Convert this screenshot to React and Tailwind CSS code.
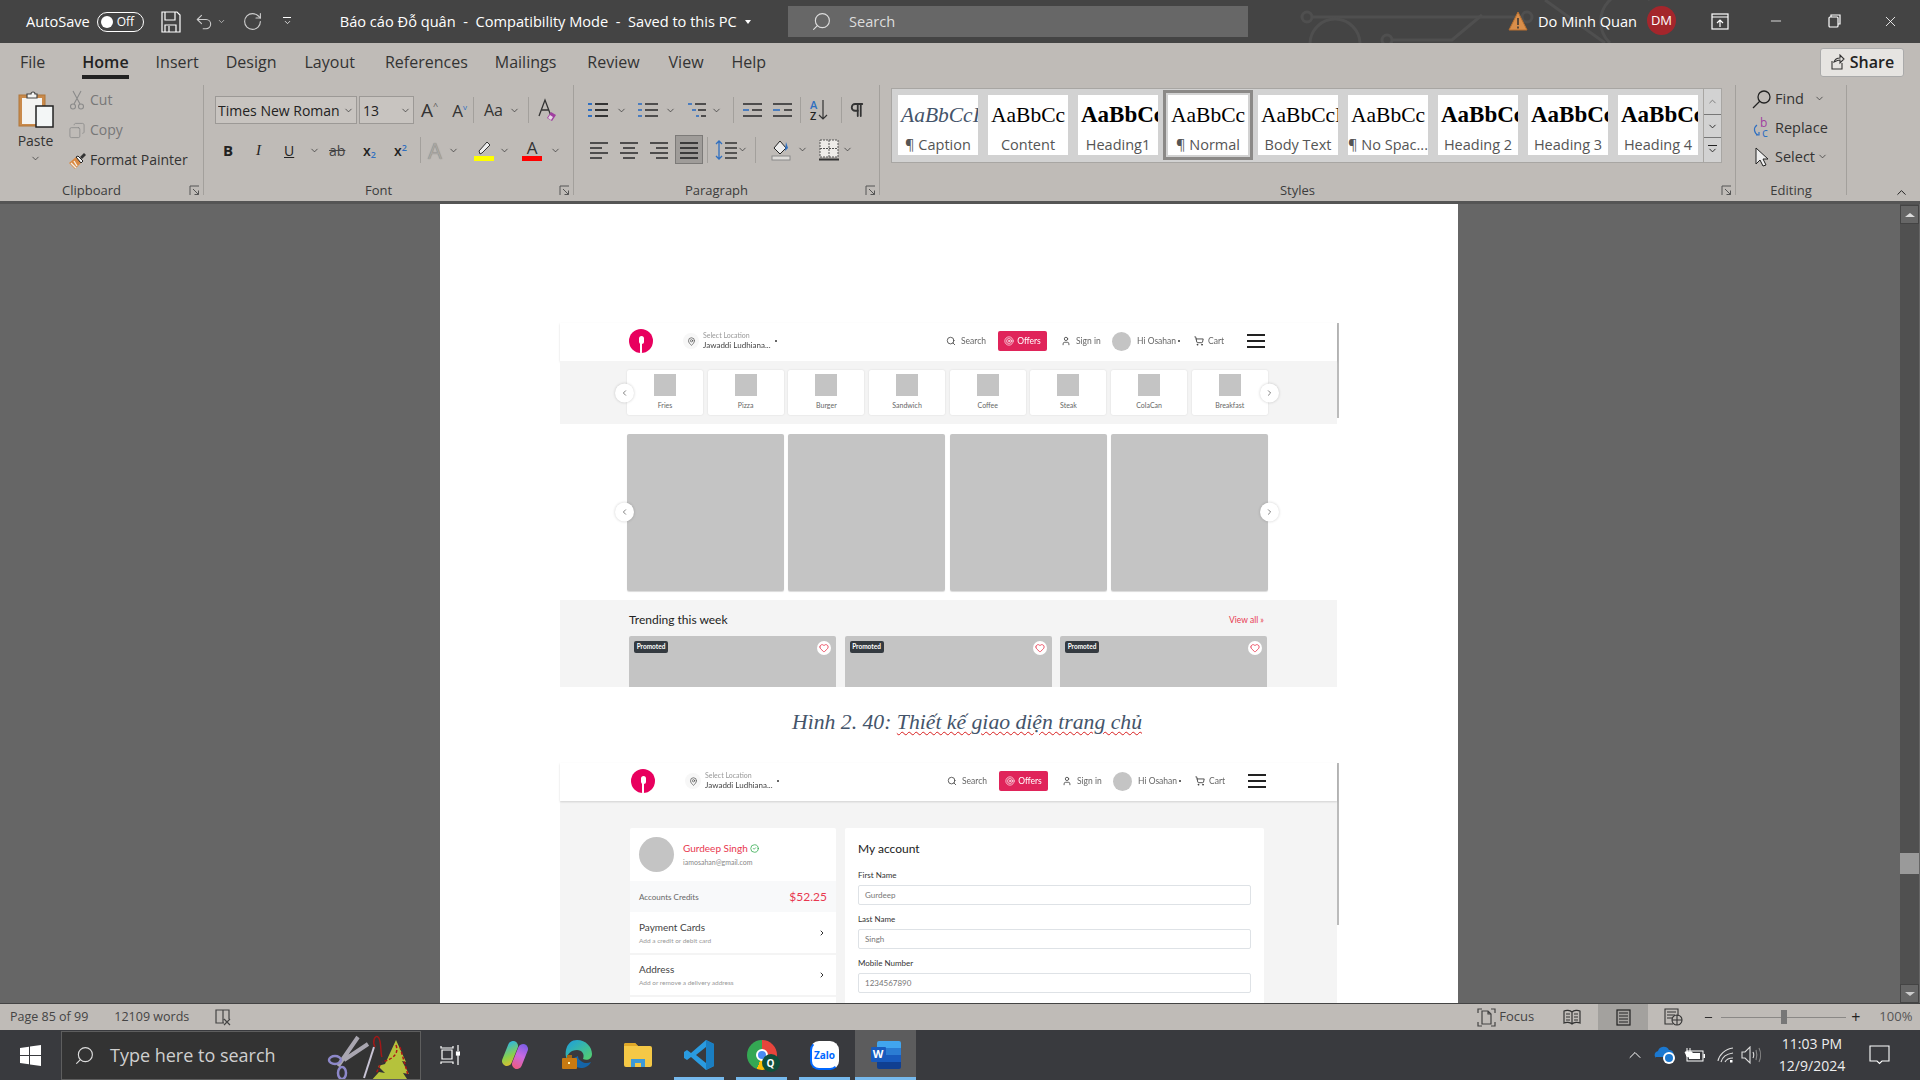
import React from "react";
import { ChevronDown, ChevronUp, ChevronLeft, ChevronRight, Search, MapPin, User, ShoppingCart, Heart, Target, CircleCheck, X, Minus, Undo2, RotateCw, Copy, Pilcrow } from "lucide-react";

const Chev = ({ c = "text-[#333]", s = 11 }) => <ChevronDown size={s} strokeWidth={1.6} className={c} />;

const Lines = ({ rows, w = 20, h = 18, color = "#333", sw = 1.6 }) => (
  <svg width={w} height={h} viewBox={`0 0 ${w} ${h}`}>
    {rows.map((r, i) => <line key={i} x1={r[0]} x2={r[1]} y1={r[2]} y2={r[2]} stroke={r[3] || color} strokeWidth={sw} />)}
  </svg>
);

const Launcher = () => (
  <svg width="11" height="11" viewBox="0 0 11 11" className="absolute right-[3px] top-[4px]" fill="none" stroke="#555" strokeWidth="1">
    <path d="M1 10V1h9M4 4l5.500 5.500M5.500 9.500h4v-4" />
  </svg>
);

function Group({ className, label, pad, children, launcher = true }) {
  return (
    <div className={`relative flex flex-col h-[110px] border-r border-[#a3a09c] ${className}`}>
      <div className="h-[96px] flex shrink-0">{children}</div>
      <div className={`relative h-[14px] flex justify-center items-start text-[13px] leading-[18px] text-[#3c3c3c] ${pad}`}>
        {label}
        {launcher && <Launcher />}
      </div>
    </div>
  );
}

const Sep = ({ className = "" }) => <div className={`w-px h-[26px] bg-[#a3a09c] ${className}`} />;

function PasteIcon() {
  return (
    <svg width="36" height="38" viewBox="0 0 36 38">
      <rect x="1" y="5" width="26" height="31" fill="#c98a4b" stroke="#b0763a" />
      <rect x="4" y="8" width="20" height="26" fill="#f4f4f2" />
      <path d="M9 8V4h4a2 2 0 0 1 4 0h2v4z" fill="#f4f4f2" stroke="#444" strokeWidth="1.2" />
      <rect x="18" y="16" width="17" height="21" fill="#f3f6f6" stroke="#222" strokeWidth="1.5" />
    </svg>
  );
}

function Brush() {
  return (
    <svg width="20" height="19" viewBox="0 0 20 19">
      <path d="M1 12l7-6 5 6-6 6z" fill="#d98a45" />
      <path d="M3 12l5 5M6 10l3 5" stroke="#f6f0e6" strokeWidth="1.4" />
      <path d="M8 6l5 6 2-2-5-5z" fill="#f4f4f4" stroke="#222" />
      <path d="M12 6l4-4 2 2-4 4z" fill="#333" />
    </svg>
  );
}

function Clipboard() {
  return (
    <Group className="w-[204px]" label="Clipboard" pad="pr-5">
      <div className="w-[68px] flex flex-col items-center pt-[5px] pl-[3px] text-[#333]">
        <PasteIcon />
        <span className="text-[14px] leading-[18px] mt-[4px]">Paste</span>
        <Chev c="text-[#333] mt-[3px]" />
      </div>
      <div className="flex flex-col text-[14px] leading-[30px]">
        <div className="flex items-center h-[30px] text-[#777]">
          <svg width="18" height="20" viewBox="0 0 18 20" fill="none" stroke="#8a8a8a" strokeWidth="1.1">
            <path d="M5 1l7 13M13 1L6 14" />
            <circle cx="5" cy="16.500" r="2.500" /><circle cx="13" cy="16.500" r="2.500" />
          </svg>
          <span className="ml-[4px]">Cut</span>
        </div>
        <div className="flex items-center h-[30px] text-[#777]">
          <Copy size={17} strokeWidth={1.1} className="w-[18px] text-[#888] scale-x-[-1]" />
          <span className="ml-[4px]">Copy</span>
        </div>
        <div className="flex items-center h-[30px] text-[#333]">
          <Brush />
          <span className="ml-[2px]">Format Painter</span>
        </div>
      </div>
    </Group>
  );
}

function Font() {
  return (
    <Group className="w-[370px]" label="Font" pad="pr-5">
      <div className="flex flex-col w-full pl-[11px]">
        <div className="flex items-center h-[28px] mt-[11px]">
          <div className="w-[142px] h-[28px] bg-[#c8c4c0] border border-[#9c9996] flex items-center pl-[2px] text-[14px] text-[#222] overflow-hidden whitespace-nowrap">
            <span className="w-[121px] overflow-hidden mr-[4px]">Times New Roman</span>
            <Chev />
          </div>
          <div className="w-[55px] h-[28px] ml-[2px] bg-[#c8c4c0] border border-[#9c9996] flex items-center pl-[3px] justify-between pr-[2px] text-[14px] text-[#222]">
            13<Chev />
          </div>
          <span className="ml-[7px] text-[19px] text-[#333] leading-none">A<sup className="text-[9px] text-[#555] top-[-8px]">^</sup></span>
          <span className="ml-[14px] text-[17px] text-[#333] leading-none">A<sup className="text-[8px] text-[#2f6fc0] top-[-7px]">v</sup></span>
          <Sep className="ml-[6px]" />
          <span className="ml-[10px] text-[16px] text-[#333] leading-none w-[25px]">Aa</span>
          <Chev />
          <Sep className="ml-[8px]" />
          <svg width="22" height="24" viewBox="0 0 22 24" className="ml-[8px]">
            <path d="M2 18L8 2l6 16M4.500 12h7" fill="none" stroke="#333" strokeWidth="1.3" />
            <path d="M14 14l5 3-4 6-5-3z" fill="#a03fa0" />
            <path d="M11 20l2-3 3 2-2 3z" fill="#e8d8e8" />
          </svg>
        </div>
        <div className="flex items-center h-[28px] mt-[12px] pl-[8px] text-[#222]">
          <span className="w-[33px] text-[15px] font-bold">B</span>
          <span className="w-[28px] text-[15px] italic" style={{ fontFamily: "'Liberation Serif',serif" }}>I</span>
          <span className="w-[25px] text-[14px] underline">U</span>
          <Chev />
          <span className="ml-[9px] w-[34px] text-[14px] line-through text-[#444]">ab</span>
          <span className="w-[31px] text-[14px] font-semibold">x<sub className="text-[9px] text-[#2f6fc0]">2</sub></span>
          <span className="w-[24px] text-[14px] font-semibold">x<sup className="text-[9px] text-[#2f6fc0]">2</sup></span>
          <Sep className="ml-[2px]" />
          <span className="ml-[7px] w-[20px] text-[22px] leading-none text-[#a9a6a2]" style={{ textShadow: "0 0 1px #777" }}>A</span>
          <Chev />
          <div className="ml-[15px] w-[20px] flex flex-col items-center">
            <svg width="18" height="16" viewBox="0 0 18 16"><path d="M5 14l-1-3 8-9 3 3-8 8z" fill="#eee" stroke="#333" /></svg>
            <div className="w-[20px] h-[5px] bg-[#ffff00]" />
          </div>
          <Chev c="text-[#333] ml-[5px]" />
          <div className="ml-[12px] w-[20px] flex flex-col items-center">
            <span className="text-[17px] leading-[16px] text-[#333]">A</span>
            <div className="w-[20px] h-[5px] bg-[#ff0000]" />
          </div>
          <Chev c="text-[#333] ml-[8px]" />
        </div>
      </div>
    </Group>
  );
}

const bl = "#2f6fc0";
function Paragraph() {
  return (
    <Group className="w-[306px]" label="Paragraph" pad="pr-5">
      <div className="flex flex-col w-full pl-[14px]">
        <div className="flex items-center h-[28px] mt-[11px]">
          <Lines rows={[[0, 4, 3, bl], [7, 20, 3], [0, 4, 9, bl], [7, 20, 9], [0, 4, 15, bl], [7, 20, 15]]} sw={2} />
          <Chev c="text-[#333] ml-[8px]" />
          <div className="ml-[11px]"><Lines rows={[[0, 4, 3, bl], [7, 20, 3], [0, 4, 9, bl], [7, 20, 9], [0, 4, 15, bl], [7, 20, 15]]} /></div>
          <Chev c="text-[#333] ml-[7px]" />
          <div className="ml-[12px]"><Lines rows={[[0, 4, 3, bl], [7, 18, 3], [4, 8, 9, bl], [10, 18, 9], [8, 11, 15, bl], [13, 18, 15]]} /></div>
          <Chev c="text-[#333] ml-[3px]" />
          <Sep className="ml-[11px]" />
          <div className="ml-[9px]"><Lines rows={[[0, 19, 3], [9, 19, 9], [0, 6, 9, bl], [0, 19, 15]]} w={19} /></div>
          <div className="ml-[11px]"><Lines rows={[[0, 19, 3], [11, 19, 9], [0, 7, 9, bl], [0, 19, 15]]} w={19} /></div>
          <Sep className="ml-[8px]" />
          <div className="ml-[9px] flex items-center w-[26px]">
            <div className="flex flex-col text-[11px] font-semibold leading-[11px]"><span className="text-[#2f6fc0]">A</span><span className="text-[#222]">Z</span></div>
            <svg width="12" height="22" viewBox="0 0 12 22" fill="none" stroke="#333" strokeWidth="1.2"><path d="M6 1v19M2 16l4 4 4-4" /></svg>
          </div>
          <Sep className="ml-[5px]" />
          <Pilcrow size={18} strokeWidth={2.4} className="ml-[6px] text-[#333]" />
        </div>
        <div className="flex items-center h-[29px] mt-[11px] pl-[2px]">
          <Lines rows={[[0, 18, 2], [0, 12, 7], [0, 18, 12], [0, 12, 17]]} w={18} />
          <div className="ml-[12px]"><Lines rows={[[0, 18, 2], [3, 15, 7], [0, 18, 12], [3, 15, 17]]} w={18} /></div>
          <div className="ml-[12px]"><Lines rows={[[0, 18, 2], [6, 18, 7], [0, 18, 12], [6, 18, 17]]} w={18} /></div>
          <div className="ml-[7px] w-[28px] h-[29px] bg-[#9f9c99] border border-[#7c7a78] flex items-center justify-center">
            <Lines rows={[[0, 18, 2], [0, 18, 7], [0, 18, 12], [0, 18, 17]]} w={18} color="#222" />
          </div>
          <Sep className="ml-[4px]" />
          <div className="ml-[7px]">
            <svg width="22" height="22" viewBox="0 0 22 22" fill="none"><path d="M4 2v18M1 5l3-3 3 3M1 17l3 3 3-3" stroke={bl} strokeWidth="1.3" /><path d="M10 4h12M10 9h12M10 14h12M10 19h12" stroke="#333" strokeWidth="1.5" /></svg>
          </div>
          <Chev />
          <Sep className="ml-[7px]" />
          <div className="ml-[15px]">
            <svg width="20" height="24" viewBox="0 0 20 24"><path d="M3 10l6-7 6 7-6 6z" fill="#eee" stroke="#222" /><path d="M15 4l2 6-3 3z" fill={bl} /><rect x="1" y="18" width="18" height="4" fill="#dedcd9" stroke="#8a8a8a" /></svg>
          </div>
          <Chev c="text-[#333] ml-[6px]" />
          <div className="ml-[11px]">
            <svg width="20" height="22" viewBox="0 0 20 22" fill="none"><rect x="1" y="1" width="18" height="17" fill="#eeece9" stroke="#555" strokeDasharray="2 1" /><path d="M10 1v17M1 9.500h18" stroke="#555" strokeDasharray="2 1" /><path d="M0 20.500h20" stroke="#333" strokeWidth="2" /></svg>
          </div>
          <Chev c="text-[#333] ml-[3px]" />
        </div>
      </div>
    </Group>
  );
}

const styleItems = [
  { n: "¶ Caption", p: "AaBbCcI", c: "italic text-[#44546a] text-[21.500px]" },
  { n: "Content", p: "AaBbCc", c: "text-black text-[21.500px]" },
  { n: "Heading1", p: "AaBbCc", c: "font-bold text-black text-[23px]" },
  { n: "¶ Normal", p: "AaBbCc", c: "text-black text-[21.500px]", sel: true },
  { n: "Body Text", p: "AaBbCcI", c: "text-black text-[21.500px]" },
  { n: "¶ No Spac...", p: "AaBbCc", c: "text-black text-[21.500px]" },
  { n: "Heading 2", p: "AaBbCc", c: "font-bold text-black text-[23px]" },
  { n: "Heading 3", p: "AaBbCc", c: "font-bold text-black text-[23px]" },
  { n: "Heading 4", p: "AaBbCc", c: "font-bold text-black text-[23px]" },
];

function Styles() {
  return (
    <Group className="w-[856px]" label="Styles" pad="pr-5">
      <div className="ml-[11px] mt-[3px] w-[831px] h-[75px] bg-[#d2d2d2] border border-[#a8a6a3] flex relative">
        <div className="flex gap-[10px] pl-[6px] pt-[6px]">
          {styleItems.map((s) => (
            <div key={s.n} className={`w-[80px] h-[60px] bg-white flex flex-col items-center overflow-hidden ${s.sel ? "outline-3 outline-[#8b8987] outline-offset-[2px]" : ""}`}>
              <div className={`w-full h-[39px] shrink-0 px-[3px] pt-[5px] overflow-hidden whitespace-nowrap leading-[30px] text-left ${s.c}`} style={{ fontFamily: "'Liberation Serif',serif" }}>{s.p}</div>
              <div className="text-[14.500px] leading-[21px] text-[#555] whitespace-nowrap">{s.n}</div>
            </div>
          ))}
        </div>
        <div className="absolute right-0 top-0 w-[18px] h-full flex flex-col border-l border-[#a8a6a3]">
          <div className="h-[25px] flex items-center justify-center"><ChevronUp size={11} className="text-[#777]" /></div>
          <div className="h-[24px] border-y border-[#777] flex items-center justify-center"><ChevronDown size={11} className="text-[#222]" /></div>
          <div className="flex-1 flex flex-col items-center justify-center"><div className="w-[9px] h-px bg-[#222] mb-[1px]" /><ChevronDown size={11} className="text-[#222] -mt-[2px]" /></div>
        </div>
      </div>
    </Group>
  );
}

function Editing() {
  return (
    <Group className="w-[111px]" label="Editing" pad="" launcher={false}>
      <div className="flex flex-col pl-[16px] -mt-[1px] text-[14.500px] text-[#333]">
        <div className="flex items-center h-[29px]">
          <svg width="20" height="20" viewBox="0 0 20 20" fill="none" stroke="#222" strokeWidth="1.3"><circle cx="12" cy="8" r="6" /><path d="M8 12l-7 7" /></svg>
          <span className="ml-[3px]">Find</span>
          <Chev c="text-[#333] ml-[10px]" />
        </div>
        <div className="flex items-center h-[29px]">
          <svg width="20" height="22" viewBox="0 0 20 22" fill="none"><text x="8" y="10" fontSize="12" fill="#a03fa0" fontFamily="Open Sans">b</text><text x="10" y="20" fontSize="12" fill="#2f6fc0" fontFamily="Open Sans">c</text><path d="M5 8c-4 3-3 8 1 10M4 18h3v-3" stroke="#2f6fc0" strokeWidth="1.2" /></svg>
          <span className="ml-[3px]">Replace</span>
        </div>
        <div className="flex items-center h-[29px]">
          <svg width="20" height="22" viewBox="0 0 20 22"><path d="M4 2v16l4-4 3 6 3-1-3-6h5z" fill="#eee" stroke="#222" /></svg>
          <span className="ml-[3px]">Select</span>
          <Chev c="text-[#333] ml-[2px]" />
        </div>
      </div>
    </Group>
  );
}

function Ribbon() {
  const tabs = [["Insert", "ml-[27px]"], ["Design", "ml-[27px]"], ["Layout", "ml-[28px]"], ["References", "ml-[30px]"], ["Mailings", "ml-[27px]"], ["Review", "ml-[31px]"], ["View", "ml-[29px]"], ["Help", "ml-[28px]"]];
  return (
    <div className="bg-[#bfbbb7] h-[158px] shrink-0 relative">
      <div className="h-[39px] flex pl-[20px] pb-[2px] text-[16px] text-[#333] items-center">
        <span>File</span>
        <div className="ml-[37px] relative h-[39px] flex items-center font-semibold text-[#222]">
          Home
          <div className="absolute left-0 right-0 bottom-[2px] h-[4px] bg-[#222]" />
        </div>
        {tabs.map(([t, c]) => <span key={t} className={c}>{t}</span>)}
        <div className="ml-auto mr-[16px] mt-[1px] w-[84px] h-[29px] bg-[#e6e4e1] border border-[#aaa] rounded-[3px] flex items-center justify-center gap-[5px] font-semibold text-[#222]">
          <svg width="15" height="16" viewBox="0 0 15 16" fill="none" stroke="#333" strokeWidth="1.1"><path d="M2 7v8h10V9M4 8c1-3 4-4 6-4V1l4 4-4 4V6c-2 0-4 1-6 2z" /></svg>
          Share
        </div>
      </div>
      <div className="flex pt-[3px]">
        <Clipboard />
        <Font />
        <Paragraph />
        <Styles />
        <Editing />
        <ChevronUp size={15} strokeWidth={1.6} className="ml-[47px] mt-[100px] text-[#222]" />
      </div>
    </div>
  );
}

function TitleBar() {
  return (
    <div className="h-[43px] shrink-0 bg-[#444444] flex items-center text-white relative overflow-hidden text-[14.600px]">
      <svg className="absolute left-[1280px] top-0" width="640" height="43" fill="none" stroke="#4f4f4f" strokeWidth="3">
        <circle cx="27" cy="17" r="5" /><path d="M32 17h210" /><circle cx="247" cy="17" r="5" />
        <path d="M30 44a25 25 0 0 1 50 0" /><circle cx="107" cy="40" r="5" /><path d="M112 40h60l30 -25" />
        <path d="M330 43a28 28 0 0 1 40 -43" /><path d="M265 0l60 43" />
      </svg>
      <span className="ml-[26px] relative">AutoSave</span>
      <div className="ml-[7px] w-[47px] h-[20px] border border-white rounded-full flex items-center pl-[3px] relative">
        <div className="w-[12px] h-[12px] bg-white rounded-full" />
        <span className="ml-[4px] text-[12px]">Off</span>
      </div>
      <svg className="ml-[17px] relative" width="20" height="22" viewBox="0 0 20 22" fill="none" stroke="white" strokeWidth="1.2">
        <path d="M1 1h15l3 3v17H1z" /><path d="M4 1v8h10V1M4 21v-7h11v7M8 15v6" />
      </svg>
      <Undo2 size={20} strokeWidth={1.3} className="ml-[13px] relative text-[#ccc]" />
      <ChevronDown size={9} strokeWidth={2} className="ml-[3px] text-[#ccc] relative" />
      <RotateCw size={21} strokeWidth={1.3} className="ml-[16px] text-[#ccc] relative" />
      <div className="ml-[20px] w-[9px] flex flex-col items-center relative"><div className="w-[8px] h-px bg-white" /><ChevronDown size={9} strokeWidth={2} /></div>
      <span className="ml-[48px] whitespace-pre relative">Báo cáo Đỗ quân  -  Compatibility Mode  -  Saved to this PC</span>
      <div className="ml-[8px] w-0 h-0 border-x-[3px] border-x-transparent border-t-[4px] border-t-white relative" />
      <div className="absolute left-[788px] top-[6px] w-[460px] h-[31px] bg-[#676767] flex items-center pl-[23px] text-[#ddd]">
        <Search size={21} strokeWidth={1.3} className="scale-x-[-1]" />
        <span className="ml-[17px]">Search</span>
      </div>
      <svg className="absolute left-[1507px] top-[10px]" width="22" height="22" viewBox="0 0 22 22"><path d="M11 2l9 18H2z" fill="#d98e4a" stroke="#b86f2e" /><path d="M11 8v7M11 16.500v2" stroke="#333" strokeWidth="1.5" /></svg>
      <span className="absolute left-[1538px] top-[11px]">Do Minh Quan</span>
      <div className="absolute left-[1647px] top-[6px] w-[29px] h-[29px] rounded-full bg-[#a4262c] flex items-center justify-center text-[13px]">DM</div>
      <svg className="absolute left-[1711px] top-[13px]" width="18" height="17" viewBox="0 0 18 17" fill="none" stroke="white" strokeWidth="1.2"><rect x="1" y="1" width="16" height="15" /><path d="M1 4h16M9 14V7M6 10l3-3 3 3" /></svg>
      <Minus size={16} strokeWidth={1.2} className="absolute left-[1768px] top-[13px]" />
      <svg className="absolute left-[1828px] top-[14px]" width="13" height="14" viewBox="0 0 13 14" fill="none" stroke="white" strokeWidth="1.2"><rect x="1" y="3" width="9" height="10" rx="1" /><path d="M3 3V1h9v9h-2" /></svg>
      <X size={17} strokeWidth={1.2} className="absolute left-[1882px] top-[13px]" />
    </div>
  );
}

const pageFont = { fontFamily: "Lato,'Noto Sans',sans-serif" };

function Spoon() {
  return (
    <div className="w-[24px] h-[24px] rounded-full bg-[#e8005e] flex items-center justify-center shrink-0 relative overflow-hidden">
      <div className="w-[5px] h-[8px] rounded-full bg-white -mt-[3px]" />
      <div className="absolute bottom-0 w-[1.500px] h-[12px] bg-white left-[11px]" />
    </div>
  );
}

function Nav({ second }) {
  return (
    <div className={`h-[38px] flex items-center relative pb-[2px] shadow-[0_1px_2px_rgba(0,0,0,0.15)] ${second ? "pl-[71px]" : "pl-[69px]"}`}>
      <Spoon />
      <div className="ml-[30px] w-[16px] h-[16px] rounded-full bg-[#f7f7f7] flex items-center justify-center shrink-0"><MapPin size={9} className="text-[#555]" /></div>
      <div className="ml-[4px] w-[72px] flex flex-col shrink-0">
        <span className="text-[7px] leading-[9px] text-[#999]">Select Location</span>
        <span className="text-[8px] leading-[11px] text-[#444] whitespace-nowrap">Jawaddi Ludhiana...</span>
      </div>
      <div className="w-[2px] h-[2px] bg-[#333] rounded-full mb-[1px] shrink-0" />
      <div className={`flex items-center text-[8.500px] text-[#666] whitespace-nowrap ${second ? "ml-[168px]" : "ml-[169px]"}`}>
        <Search size={10} className="text-[#444]" />
        <span className="ml-[5px] w-[24px]">Search</span>
        <div className="w-[49px] h-[20px] ml-[13px] bg-[#e0245a] rounded-[2px] flex items-center justify-center gap-[3px] text-white">
          <Target size={10} strokeWidth={1.6} /> Offers
        </div>
        <User size={10} className="ml-[14px] text-[#444]" />
        <span className="ml-[5px] w-[24px]">Sign in</span>
        <div className="ml-[12px] w-[19px] h-[19px] rounded-full bg-[#c4c4c4]" />
        <span className="ml-[6px] w-[36px]">Hi Osahan</span>
        <div className="ml-[5px] w-[2px] h-[2px] rounded-full bg-[#333]" />
        <ShoppingCart size={10} className="ml-[14px] text-[#333]" />
        <span className="ml-[4px] w-[16px]">Cart</span>
        <div className="ml-[23px] w-[18px] flex flex-col gap-[4px]">
          <div className="h-[2px] bg-[#222]" /><div className="h-[2px] bg-[#222]" /><div className="h-[2px] bg-[#222]" />
        </div>
      </div>
    </div>
  );
}

const Arrow = ({ left }) => (
  <div className={`absolute top-1/2 -translate-y-1/2 w-[19px] h-[19px] rounded-full bg-white shadow-[0_0_3px_rgba(0,0,0,0.2)] flex items-center justify-center ${left ? "left-[55px]" : "left-[700px]"}`}>
    {left ? <ChevronLeft size={9} className="text-[#555]" /> : <ChevronRight size={9} className="text-[#555]" />}
  </div>
);

function Home() {
  const cats = ["Fries", "Pizza", "Burger", "Sandwich", "Coffee", "Steak", "ColaCan", "Breakfast"];
  return (
    <div className="w-[777px] ml-[120px] relative shrink-0 blur-[0.3px]" style={pageFont}>
      <div className="absolute left-[777px] top-0 w-[2px] h-[95px] bg-[#bbb]" />
      <Nav />
      <div className="h-[63px] bg-[#f4f4f4] pt-[9px] pl-[67px] relative">
        <div className="flex gap-[4.700px]">
          {cats.map((c) => (
            <div key={c} className="w-[76px] h-[45px] bg-white rounded-[2px] shadow-[0_0_2px_rgba(0,0,0,0.12)] flex flex-col items-center pt-[4px]">
              <div className="w-[22px] h-[22px] bg-[#c4c4c4]" />
              <span className="text-[7px] leading-[9px] mt-[5px] text-[#666]">{c}</span>
            </div>
          ))}
        </div>
        <Arrow left /><Arrow />
      </div>
      <div className="h-[176px] pt-[10px] pl-[67px] relative">
        <div className="flex gap-[4.300px]">
          <div className="w-[157px] h-[157px] bg-[#c4c4c4] rounded-[2px] shadow-[0_1px_1px_rgba(0,0,0,0.15)]" />
          <div className="w-[157px] h-[157px] bg-[#c4c4c4] rounded-[2px] shadow-[0_1px_1px_rgba(0,0,0,0.15)]" />
          <div className="w-[157px] h-[157px] bg-[#c4c4c4] rounded-[2px] shadow-[0_1px_1px_rgba(0,0,0,0.15)]" />
          <div className="w-[157px] h-[157px] bg-[#c4c4c4] rounded-[2px] shadow-[0_1px_1px_rgba(0,0,0,0.15)]" />
        </div>
        <Arrow left /><Arrow />
      </div>
      <div className="h-[87px] bg-[#f4f4f4] pl-[69px] pr-[69px] overflow-hidden">
        <div className="h-[36px] flex items-center justify-between pt-[4px]">
          <span className="text-[12px] text-[#222]">Trending this week</span>
          <span className="text-[8.500px] text-[#e8384f] mr-[4px]">View all »</span>
        </div>
        <div className="flex gap-[8.500px]">
          {[0, 1, 2].map((i) => (
            <div key={i} className="w-[207px] h-[60px] shrink-0 bg-[#c4c4c4] rounded-[2px] flex justify-between items-start pt-[5px] px-[5px]">
              <span className="w-[34px] h-[12px] bg-[#343a40] rounded-[2px] text-white text-[6.500px] leading-[12px] text-center font-bold">Promoted</span>
              <div className="w-[14px] h-[14px] rounded-full bg-white flex items-center justify-center"><Heart size={10} className="text-[#e8384f]" /></div>
            </div>
          ))}
        </div>
      </div>
    </div>
  );
}

function Caption() {
  return (
    <div className="h-[76px] pt-[20px] pl-[36px] text-center text-[21.700px] leading-[30px] italic text-[#44546a]" style={{ fontFamily: "'Liberation Serif',serif" }}>
      Hình 2. 40: <span className="underline decoration-wavy decoration-[#d81e1e] decoration-1 underline-offset-[2px]">Thiết kế giao diện trang chủ</span>
    </div>
  );
}

const Field = ({ label, value }) => (
  <div className="mt-[9px]">
    <div className="text-[8px] leading-[10px] text-[#333] h-[10px]">{label}</div>
    <div className="h-[20px] mt-[5px] border border-[#dee2e6] rounded-[2px] bg-white px-[6px] flex items-center text-[8px] text-[#777]">{value}</div>
  </div>
);

function Account() {
  return (
    <div className="w-[777px] ml-[120px] relative shrink-0 blur-[0.3px]" style={pageFont}>
      <div className="absolute left-[777px] top-0 w-[2px] h-[162px] bg-[#bbb]" />
      <Nav second />
      <div className="h-[202px] bg-[#f4f4f4] pt-[27px] pl-[70px] flex gap-[9px] overflow-hidden">
        <div className="w-[206px] flex flex-col gap-[2px] shrink-0">
          <div className="bg-white rounded-t-[2px] shrink-0">
            <div className="h-[53px] flex items-center pl-[9px]">
              <div className="w-[35px] h-[35px] rounded-full bg-[#c4c4c4]" />
              <div className="ml-[9px]">
                <div className="text-[10px] leading-[13px] text-[#e8384f] flex items-center gap-[2px]">Gurdeep Singh <CircleCheck size={9} className="text-[#28a745]" /></div>
                <div className="text-[7px] leading-[10px] mt-[2px] text-[#888]">iamosahan@gmail.com</div>
              </div>
            </div>
            <div className="h-[31px] bg-[#f8f9fa] flex items-center justify-between px-[9px]">
              <span className="text-[8px] text-[#666]">Accounts Credits</span>
              <span className="text-[12px] text-[#e8384f]">$52.25</span>
            </div>
            <div className="h-[41px] flex items-center justify-between px-[9px]">
              <div>
                <div className="text-[10px] leading-[13px] text-[#444]">Payment Cards</div>
                <div className="text-[6.500px] leading-[9px] mt-[2px] text-[#999]">Add a credit or debit card</div>
              </div>
              <ChevronRight size={8} strokeWidth={3} className="text-[#333] mr-[1px]" />
            </div>
          </div>
          <div className="bg-white h-[40px] shrink-0 flex items-center justify-between px-[9px]">
            <div>
              <div className="text-[10px] leading-[13px] text-[#444]">Address</div>
              <div className="text-[6.500px] leading-[9px] mt-[2px] text-[#999]">Add or remove a delivery address</div>
            </div>
            <ChevronRight size={8} strokeWidth={3} className="text-[#333] mr-[1px]" />
          </div>
          <div className="bg-white h-[40px] shrink-0" />
        </div>
        <div className="w-[419px] h-[200px] shrink-0 bg-white rounded-t-[2px] px-[13px] pt-[13px]">
          <div className="text-[12px] leading-[16px] text-[#222] pb-[4px]">My account</div>
          <Field label="First Name" value="Gurdeep" />
          <Field label="Last Name" value="Singh" />
          <Field label="Mobile Number" value="1234567890" />
        </div>
      </div>
    </div>
  );
}

function Scrollbar() {
  return (
    <div className="ml-auto mr-[1px] w-[19px] bg-[#505050] flex flex-col relative">
      <div className="h-[19px] bg-[#666] border border-[#444] flex items-center justify-center mt-[1px]">
        <div className="w-0 h-0 border-x-[5px] border-x-transparent border-b-[4px] border-b-[#ddd]" />
      </div>
      <div className="flex-1"><div className="mt-[629px] h-[21px] bg-[#9a9a9a]" /></div>
      <div className="h-[19px] bg-[#666] border border-[#444] flex items-center justify-center">
        <div className="w-0 h-0 border-x-[5px] border-x-transparent border-t-[4px] border-t-[#ccc]" />
      </div>
    </div>
  );
}

function StatusBar() {
  return (
    <div className="h-[27px] shrink-0 bg-[#bfbbb7] border-t border-[#444] flex items-center text-[12.500px] text-[#444]">
      <span className="ml-[10px]">Page 85 of 99</span>
      <span className="ml-[26px]">12109 words</span>
      <svg className="ml-[25px]" width="18" height="18" viewBox="0 0 18 18" fill="none" stroke="#444" strokeWidth="1.2"><path d="M10 15H2V2h7M9 2h6v9" /><path d="M9 2v13M10 11l6 6M16 11l-6 6" /></svg>
      <svg className="ml-[1245px]" width="19" height="19" viewBox="0 0 19 19" fill="none" stroke="#444" strokeWidth="1.2"><path d="M1 5V1h4M14 1h4v4M1 14v4h4M14 18h4v-4" /><path d="M5 3h6l3 3v10H5zM11 3v3h3" /></svg>
      <span className="ml-[3px] text-[13px]">Focus</span>
      <svg className="ml-[29px]" width="18" height="17" viewBox="0 0 18 17" fill="none" stroke="#333" strokeWidth="1.2"><path d="M9 3C7 1 3 1 1 2v12c2-1 6-1 8 1 2-2 6-2 8-1V2c-2-1-6-1-8 1zM9 3v12M3 5h4M3 8h4M3 11h4M11 5h4M11 8h4M11 11h4" /></svg>
      <div className="ml-[17px] w-[50px] h-[26px] bg-[#a3a19e] flex items-center justify-center">
        <svg width="15" height="17" viewBox="0 0 15 17" fill="none" stroke="#222" strokeWidth="1.2"><rect x="1" y="1" width="13" height="15" /><path d="M3 4h9M3 7h9M3 10h9M3 13h9" /></svg>
      </div>
      <svg className="ml-[16px]" width="19" height="18" viewBox="0 0 19 18" fill="none" stroke="#333" strokeWidth="1.1"><path d="M9 16H1V1h13v7M3 4h9M3 7h8M3 10h5" /><circle cx="13" cy="12" r="5" /><path d="M8 12h10M13 7v10" /></svg>
      <Minus size={11} className="ml-[20px] text-[#222]" />
      <div className="ml-[7px] w-[125px] h-px bg-[#8a8886] relative flex items-center">
        <div className="ml-[60px] w-[6px] h-[14px] bg-[#777]" />
      </div>
      <span className="ml-[5px] text-[16px] leading-none text-[#222]">+</span>
      <span className="ml-[19px] text-[13px] text-[#555]">100%</span>
    </div>
  );
}

function TaskIcon({ line, className, children }) {
  return (
    <div className={`h-[50px] flex items-center justify-center relative ${className}`}>
      {children}
      {line && <div className="absolute left-0 right-0 bottom-0 h-[3px] bg-[#76b9ed]" />}
    </div>
  );
}

function Taskbar() {
  return (
    <div className="h-[50px] shrink-0 bg-[#393a3e] flex items-center text-white">
      <svg className="ml-[20px]" width="21" height="21" viewBox="0 0 21 21" fill="white"><path d="M0 3l9-1.300v8.300H0zM10 1.500L21 0v10H10zM0 11h9v8.300L0 18zM10 11h11v10l-11-1.500z" /></svg>
      <div className="ml-[20px] w-[360px] h-[49px] bg-[#333333] border border-[#5e5e5e] flex items-center relative overflow-hidden">
        <Search size={21} strokeWidth={1.3} className="ml-[12px] scale-x-[-1] text-[#ddd]" />
        <span className="ml-[15px] text-[18px] text-[#cfcfcf]">Type here to search</span>
        <svg className="absolute left-[264px] top-0" width="96" height="49" viewBox="0 0 96 49" fill="none">
          <path d="M32 5L12 34M42 12L18 28" stroke="#a9a6b0" strokeWidth="4" />
          <ellipse cx="9" cy="28" rx="6" ry="4" stroke="#8d88c9" strokeWidth="2.500" />
          <ellipse cx="16" cy="41" rx="4" ry="6" stroke="#8d88c9" strokeWidth="2.500" />
          <path d="M48 15L38 46" stroke="#c9c5d6" strokeWidth="2" />
          <path d="M49 15c-3-6 0-12 3-10 4 3 2 16 4 20" stroke="#a01818" strokeWidth="1.500" />
          <path d="M70 8l10 22-4-1 7 13-6-1 6 9H44l9-10 6 1-7-7 7-2z" fill="#b5c23c" />
          <path d="M70 13c3 8-2 14-14 17M74 15l8 28M54 33l-4 9" stroke="#b01818" strokeWidth="1.500" strokeDasharray="3 2" />
        </svg>
      </div>
      <svg className="ml-[19px]" width="20" height="20" viewBox="0 0 20 20" fill="none" stroke="white" strokeWidth="1.2"><path d="M1 1v2h12V1M2 5h10v9H2zM1 19v-2h12v2M18 0v6M18 10v10" /><rect x="16.500" y="7" width="3" height="3" fill="white" /></svg>
      <div className="ml-[30px] w-[49px] flex justify-center">
        <svg width="30" height="28" viewBox="0 0 30 28" fill="none">
          <defs>
            <linearGradient id="cp1" gradientUnits="userSpaceOnUse" x1="4" y1="2" x2="14" y2="26"><stop offset="0" stopColor="#2ab5e8" /><stop offset="0.55" stopColor="#8bd04a" /><stop offset="1" stopColor="#f5b72a" /></linearGradient>
            <linearGradient id="cp2" gradientUnits="userSpaceOnUse" x1="28" y1="2" x2="14" y2="28"><stop offset="0" stopColor="#6a5be8" /><stop offset="0.5" stopColor="#c86ae0" /><stop offset="1" stopColor="#f25a7a" /></linearGradient>
          </defs>
          <path d="M13 5L7 20" stroke="url(#cp1)" strokeWidth="10" strokeLinecap="round" />
          <path d="M17 23L23 8" stroke="url(#cp2)" strokeWidth="10" strokeLinecap="round" />
        </svg>
      </div>
      <div className="ml-[13px] w-[49px] flex justify-center">
        <svg width="30" height="30" viewBox="0 0 30 30">
          <defs><linearGradient id="ed" x1="0" y1="0" x2="1" y2="1"><stop offset="0" stopColor="#1b9de2" /><stop offset="1" stopColor="#57d268" /></linearGradient></defs>
          <path d="M15 0c9 0 15 7 15 14 0 5-5 7-9 5 2-5-1-9-6-9-6 0-10 4-10 9C2 14 4 0 15 0z" fill="url(#ed)" />
          <path d="M10 19c0 5 4 9 9 9 4 0 8-2 10-6-4 2-8 1-10-1-2-1-3-3-3-5z" fill="#1565a8" />
          <rect x="0" y="18" width="15" height="11" rx="1" fill="#c87a12" /><rect x="5" y="15" width="5" height="3" fill="#a86a12" /><rect x="6" y="22" width="2" height="2" fill="#fff2b0" />
        </svg>
      </div>
      <div className="ml-[11px] w-[51px] flex justify-center">
        <svg width="28" height="24" viewBox="0 0 28 24">
          <path d="M0 2a2 2 0 0 1 2-2h9l3 3h12a2 2 0 0 1 2 2v17a2 2 0 0 1-2 2H2a2 2 0 0 1-2-2z" fill="#f5c846" />
          <path d="M0 2a2 2 0 0 1 2-2h9l3 3H0z" fill="#e0a828" />
          <path d="M7 24v-8h14v8h-4v-4h-6v4z" fill="#3d9ad8" />
        </svg>
      </div>
      <TaskIcon line className="ml-[11px] w-[50px]">
        <svg width="30" height="30" viewBox="0 0 30 30">
          <path d="M22 0l8 4v22l-8 4L7 17l-4 3-3-2v-6l3-2 4 3z" fill="#2a9be0" />
          <path d="M22 0l8 4v22l-8 4z" fill="#1a7ec2" />
          <path d="M22 7L12 15l10 8z" fill="#393a3e" />
        </svg>
      </TaskIcon>
      <TaskIcon line className="ml-[12px] w-[51px]">
        <div className="relative w-[30px] h-[30px]">
          <div className="w-[30px] h-[30px] rounded-full bg-[conic-gradient(#e8453c_0_120deg,#fbbc04_120deg_200deg,#34a853_200deg_360deg)] flex items-center justify-center">
            <div className="w-[12px] h-[12px] rounded-full bg-[#4a8af4] border-2 border-white" />
          </div>
          <div className="absolute right-[-3px] bottom-[-2px] w-[18px] h-[18px] rounded-full bg-[#0f4f3c] text-white flex items-center justify-center text-[10px] font-bold">Q</div>
        </div>
      </TaskIcon>
      <TaskIcon line className="ml-[12px] w-[51px]">
        <div className="w-[29px] h-[29px] rounded-[9px] bg-white border-[2px] border-[#0068ff] border-t-white border-r-white flex items-center justify-center text-[#0068ff] text-[10px] font-bold">Zalo</div>
      </TaskIcon>
      <TaskIcon line className="ml-[5px] w-[61px] bg-[#5c5c5d]">
        <div className="relative w-[30px] h-[28px]">
          <div className="absolute left-[6px] top-0 w-[24px] h-[28px] rounded-[2px] overflow-hidden flex flex-col">
            <div className="h-[7px] bg-[#41a5ee]" /><div className="h-[7px] bg-[#2b7cd3]" /><div className="h-[7px] bg-[#185abd]" /><div className="h-[7px] bg-[#103f91]" />
          </div>
          <div className="absolute left-0 top-[6px] w-[15px] h-[15px] bg-[#185abd] rounded-[1px] text-white text-[11px] font-bold flex items-center justify-center">W</div>
        </div>
      </TaskIcon>
      <ChevronUp size={20} strokeWidth={1.2} className="ml-[709px]" />
      <svg className="ml-[9px]" width="22" height="20" viewBox="0 0 22 20"><path d="M2 13a4 4 0 0 1 2-7 6 6 0 0 1 11-1 4 4 0 0 1 4 6v1H2z" fill="#1b78d0" /><circle cx="15" cy="13" r="6" fill="white" /><circle cx="15" cy="13" r="4" fill="#1b78d0" /></svg>
      <svg className="ml-[8px]" width="21" height="14" viewBox="0 0 21 14" fill="none"><path d="M3 0v4M6 0v4M1 4h7v2a3 3 0 0 1-6 0z" fill="white" stroke="white" /><rect x="3" y="3" width="16" height="10" stroke="white" /><rect x="5" y="5" width="11" height="6" fill="white" /><rect x="19.500" y="6" width="1.500" height="4" fill="white" /></svg>
      <svg className="ml-[12px]" width="18" height="16" viewBox="0 0 18 16" fill="none" stroke="#ddd" strokeWidth="1.1"><path d="M1 14C2 8 8 2 16 1M4 15c1-4 5-8 12-9M8 15c1-2 3-4 8-4" /><rect x="13" y="13" width="2.500" height="2.500" fill="white" stroke="none" /></svg>
      <svg className="ml-[6px]" width="21" height="19" viewBox="0 0 21 19" fill="none" stroke="#ddd" strokeWidth="1.1"><path d="M1 6h3l5-5v16l-5-5H1zM12 6c1 2 1 4 0 6" /><path d="M15 4c1 3 1 7 0 10M18 2c2 4 2 10 0 14" stroke="#888" /></svg>
      <div className="ml-[16px] w-[68px] flex flex-col items-center text-[14px] leading-[22px] text-[#eee] whitespace-nowrap">
        <span>11:03 PM</span>
        <span>12/9/2024</span>
      </div>
      <svg className="ml-[23px]" width="21" height="20" viewBox="0 0 21 20" fill="none" stroke="white" strokeWidth="1.1"><path d="M1 1h19v15h-7l-2.500 2.500L8 16H1z" /></svg>
    </div>
  );
}

export default function App() {
  return (
    <div className="w-[1920px] h-[1080px] flex flex-col overflow-hidden" style={{ fontFamily: "'Open Sans','Noto Sans',sans-serif" }}>
      <TitleBar />
      <Ribbon />
      <div className="flex-1 min-h-0 bg-[#666666] flex border-t-[3px] border-[#555]">
        <div className="ml-[440px] w-[1018px] bg-white flex flex-col overflow-hidden pt-[119px]">
          <Home />
          <Caption />
          <Account />
        </div>
        <Scrollbar />
      </div>
      <StatusBar />
      <Taskbar />
    </div>
  );
}
